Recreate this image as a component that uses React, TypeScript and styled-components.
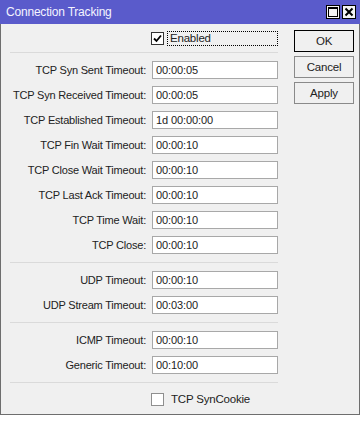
import React from "react";
import styled, { createGlobalStyle } from "styled-components";

const GlobalStyle = createGlobalStyle`
  html, body {
    margin: 0;
    padding: 0;
    background: #ffffff;
  }
  body {
    font-family: "Liberation Sans", Arial, sans-serif;
    font-size: 11px;
  }
`;

type Field = { label: string; value: string };

const tcpFields: Field[] = [
  { label: "TCP Syn Sent Timeout:", value: "00:00:05" },
  { label: "TCP Syn Received Timeout:", value: "00:00:05" },
  { label: "TCP Established Timeout:", value: "1d 00:00:00" },
  { label: "TCP Fin Wait Timeout:", value: "00:00:10" },
  { label: "TCP Close Wait Timeout:", value: "00:00:10" },
  { label: "TCP Last Ack Timeout:", value: "00:00:10" },
  { label: "TCP Time Wait:", value: "00:00:10" },
  { label: "TCP Close:", value: "00:00:10" },
];

const udpFields: Field[] = [
  { label: "UDP Timeout:", value: "00:00:10" },
  { label: "UDP Stream Timeout:", value: "00:03:00" },
];

const otherFields: Field[] = [
  { label: "ICMP Timeout:", value: "00:00:10" },
  { label: "Generic Timeout:", value: "00:10:00" },
];

const App: React.FC = () => {
  const renderGroup = (fields: Field[]) => (
    <Group>
      {fields.map((f) => (
        <Row key={f.label}>
          <Label>{f.label}</Label>
          <Input>{f.value}</Input>
        </Row>
      ))}
    </Group>
  );

  return (
    <>
      <GlobalStyle />
      <Window>
        <TitleBar>
          <Title>Connection Tracking</Title>
          <TitleButtons>
            <TitleButton>
              <svg width="10" height="10" viewBox="0 0 10 10">
                <rect x="0.5" y="0.5" width="9" height="9" fill="none" stroke="#000" />
                <line x1="0" y1="1.5" x2="10" y2="1.5" stroke="#000" />
              </svg>
            </TitleButton>
            <TitleButton>
              <svg width="10" height="10" viewBox="0 0 10 10">
                <path d="M1.5 1.5 L8.5 8.5 M8.5 1.5 L1.5 8.5" stroke="#000" strokeWidth="2" />
              </svg>
            </TitleButton>
          </TitleButtons>
        </TitleBar>
        <Body>
          <Form>
            <CheckRow $top>
              <CheckBox $dark>
                <svg width="9" height="9" viewBox="0 0 9 9">
                  <path d="M1 4.5 L3.5 7 L8 1.5" fill="none" stroke="#000" strokeWidth="1.8" />
                </svg>
              </CheckBox>
              <CheckLabel $focused>Enabled</CheckLabel>
            </CheckRow>
            <Separator />
            {renderGroup(tcpFields)}
            <Separator />
            {renderGroup(udpFields)}
            <Separator />
            {renderGroup(otherFields)}
            <Separator />
            <CheckRow>
              <CheckBox />
              <CheckLabel>TCP SynCookie</CheckLabel>
            </CheckRow>
          </Form>
          <Buttons>
            <Button $default>OK</Button>
            <Button>Cancel</Button>
            <Button>Apply</Button>
          </Buttons>
        </Body>
      </Window>
    </>
  );
};

const Window = styled.div`
  width: 360px;
  height: 415px;
  box-sizing: border-box;
  display: flex;
  flex-direction: column;
  background: #f0f0f0;
  border: 1px solid #6e6e6e;
  border-top: none;
`;

const TitleBar = styled.div`
  height: 25px;
  margin: 0 -1px;
  background: #5a5bcb;
  display: flex;
  align-items: center;
  justify-content: space-between;
  padding: 0 4px 0 6px;
`;

const Title = styled.span`
  color: #f4f4ff;
  font-size: 12px;
  letter-spacing: -0.2px;
`;

const TitleButtons = styled.div`
  display: flex;
  gap: 2px;
`;

const TitleButton = styled.div`
  width: 14px;
  height: 14px;
  box-sizing: border-box;
  background: #f4f4f4;
  border: 1px solid #000;
  display: flex;
  align-items: center;
  justify-content: center;
`;

const Body = styled.div`
  flex: 1;
  display: flex;
  padding: 0 0 0 9px;
`;

const Form = styled.div`
  width: 268px;
  display: flex;
  flex-direction: column;
`;

const CheckRow = styled.div<{ $top?: boolean }>`
  display: flex;
  align-items: center;
  height: ${(p) => (p.$top ? "28px" : "29px")};
  padding-left: 141px;
  padding-top: ${(p) => (p.$top ? "0" : "2px")};
`;

const CheckBox = styled.div<{ $dark?: boolean }>`
  width: 13px;
  height: 13px;
  box-sizing: border-box;
  background: #fff;
  border: 1px solid ${(p) => (p.$dark ? "#333" : "#8f8f8f")};
  display: flex;
  align-items: center;
  justify-content: center;
`;

const CheckLabel = styled.span<{ $focused?: boolean }>`
  margin-left: ${(p) => (p.$focused ? "3px" : "5px")};
  padding: 0 2px;
  line-height: 13px;
  font-size: 11.5px;
  letter-spacing: -0.2px;
  color: #222;
  ${(p) =>
    p.$focused &&
    `
    flex: 1;
    border: 1px dotted #000;
  `}
`;

const Separator = styled.div`
  height: 1px;
  background: #dadada;
`;

const Group = styled.div`
  display: flex;
  flex-direction: column;
  gap: 7px;
  padding: 8px 0 8px;
`;

const Row = styled.div`
  display: grid;
  grid-template-columns: 136px 126px;
  column-gap: 6px;
  align-items: center;
`;

const Label = styled.span`
  text-align: right;
  white-space: nowrap;
  font-size: 11px;
  letter-spacing: -0.2px;
  color: #222;
`;

const Input = styled.div`
  height: 18px;
  box-sizing: border-box;
  background: #fff;
  border: 1px solid #a8a8a8;
  padding: 0 3px;
  line-height: 16px;
  font-size: 11px;
  letter-spacing: -0.1px;
  color: #222;
`;

const Buttons = styled.div`
  display: flex;
  flex-direction: column;
  gap: 4px;
  padding: 6px 0 0 16px;
`;

const Button = styled.div<{ $default?: boolean }>`
  width: 60px;
  height: 22px;
  box-sizing: border-box;
  display: flex;
  align-items: center;
  justify-content: center;
  background: #f0f0f0;
  border: 1px solid ${(p) => (p.$default ? "#000" : "#8a8a8a")};
  font-size: 11.5px;
  letter-spacing: -0.2px;
  color: #222;
`;

export default App;
